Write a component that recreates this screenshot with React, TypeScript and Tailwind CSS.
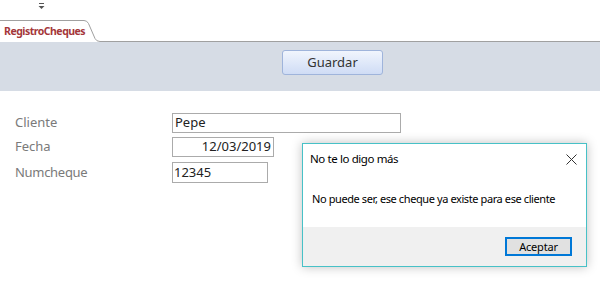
export default function App() {
  const font = { fontFamily: '"Noto Sans", "Open Sans", sans-serif' };
  return (
    <div className="relative w-[600px] h-[286px] bg-white overflow-hidden" style={font}>
      {/* quick access toolbar arrow */}
      <div className="h-[20px] pl-[38px] pt-[3px]">
        <svg width="7" height="7" viewBox="0 0 7 7">
          <rect x="1" y="0" width="5" height="1" fill="#555" />
          <path d="M0.5 3 L6.5 3 L3.5 6 Z" fill="#555" />
        </svg>
      </div>

      {/* tab row */}
      <div className="relative h-[22px]">
        <svg className="absolute inset-0" width="600" height="22" viewBox="0 0 600 22">
          <path d="M0 0.5 L84 0.5 Q87 0.5 88.5 3.5 L95 18.5 Q96.5 21.5 100 21.5 L600 21.5" fill="white" stroke="#a0a0a0" strokeWidth="1" />
        </svg>
        <span className="relative block pl-[4px] pt-[4px] text-[10.5px] tracking-[-0.5px] font-bold text-[#a4373a] leading-[14px]">
          RegistroCheques
        </span>
      </div>

      {/* header band */}
      <div className="h-[49px] bg-[#d6dce5] pt-[7px] pl-[282px]">
        <button className="w-[101px] h-[25px] rounded-[3px] border border-[#9fb4db] bg-gradient-to-b from-[#f1f5fd] to-[#cfdcf5] text-[13px] text-[#333] leading-none">
          Guardar
        </button>
      </div>

      {/* form */}
      <div className="pt-[22px] pl-[15px] flex flex-col gap-[4px] text-[13px]">
        <div className="flex items-center h-[20px]">
          <span className="w-[157px] text-[#7a7a7a]">Cliente</span>
          <div className="w-[229px] h-[20px] border border-[#ababab] pl-[2px] flex items-center text-[#222]">Pepe</div>
        </div>
        <div className="flex items-center h-[20px]">
          <span className="w-[157px] text-[#7a7a7a]">Fecha</span>
          <div className="w-[102px] h-[20px] border border-[#ababab] pr-[2px] flex items-center justify-end text-[#222]">12/03/2019</div>
        </div>
        <div className="flex items-center h-[21px] mt-[1px]">
          <span className="w-[157px] text-[#7a7a7a] tracking-[-0.3px]">Numcheque</span>
          <div className="w-[96px] h-[21px] border border-[#ababab] pl-[1px] flex items-center text-[#222]">12345</div>
        </div>
      </div>

      {/* message box */}
      <div className="absolute left-[302px] top-[143px] w-[285px] h-[124px] bg-white border border-[#47c1c7] shadow-[0_0_10px_rgba(0,0,0,0.25)] flex flex-col text-black">
        <div className="h-[30px] flex items-center justify-between pl-[7px] pr-[9px] text-[11.5px] tracking-[-0.4px]">
          <span>No te lo digo más</span>
          <svg width="11" height="11" viewBox="0 0 11 11">
            <path d="M0.5 0.5 L10.5 10.5 M10.5 0.5 L0.5 10.5" stroke="#333" strokeWidth="1" />
          </svg>
        </div>
        <div className="flex-1 flex items-center pl-[9px] text-[11px] tracking-[-0.4px] pb-[2px]">
          No puede ser, ese cheque ya existe para ese cliente
        </div>
        <div className="h-[39px] bg-[#f0f0f0] flex items-center justify-end pr-[14px]">
          <button className="w-[67px] h-[19px] border-2 border-[#0078d7] bg-[#e1e1e1] text-[11px] tracking-[-0.2px] leading-none">
            Aceptar
          </button>
        </div>
      </div>
    </div>
  );
}
